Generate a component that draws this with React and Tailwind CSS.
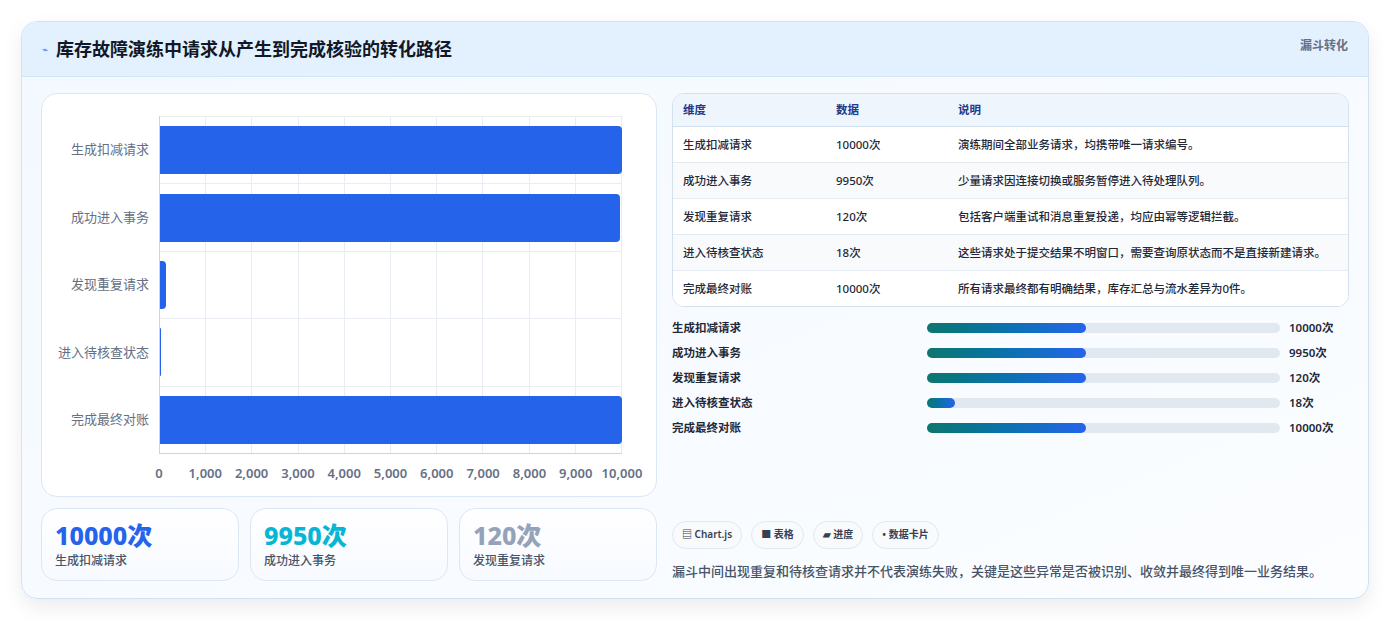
import React from "react";

const rows = [
  { name: "生成扣减请求", v: 10000, desc: "演练期间全部业务请求，均携带唯一请求编号。" },
  { name: "成功进入事务", v: 9950, desc: "少量请求因连接切换或服务暂停进入待处理队列。" },
  { name: "发现重复请求", v: 120, desc: "包括客户端重试和消息重复投递，均应由幂等逻辑拦截。" },
  { name: "进入待核查状态", v: 18, desc: "这些请求处于提交结果不明窗口，需要查询原状态而不是直接新建请求。" },
  { name: "完成最终对账", v: 10000, desc: "所有请求最终都有明确结果，库存汇总与流水差异为0件。" },
];
const progress = [45, 45, 45, 8, 45];
const ticks = ["0", "1,000", "2,000", "3,000", "4,000", "5,000", "6,000", "7,000", "8,000", "9,000", "10,000"];

const Chart = () => (
  <div className="h-[404px] rounded-2xl border border-[#dbe7f5] bg-white pt-[22px] pr-[34px] pl-[10px]">
    <div className="flex">
      <div className="w-[107px] flex flex-col">
        {rows.map((r) => (
          <div key={r.name} className="h-[67.5px] flex items-center justify-end pr-[10px] text-[13px] text-[#667085]">
            {r.name}
          </div>
        ))}
      </div>
      <div className="relative flex-1 h-[338px] border-l border-b border-[#cbd5e1]">
        <div className="absolute inset-0 grid grid-cols-10">
          {ticks.slice(1).map((t) => (
            <div key={t} className="border-r border-[#e8edf3]" />
          ))}
        </div>
        <div className="absolute inset-0 flex flex-col">
          {rows.map((r) => (
            <div key={r.name} className="h-[67.5px] flex items-center border-t border-[#e8edf3]">
              <div className="h-[48px] rounded-r bg-[#2563eb]" style={{ width: `${(r.v / 10000) * 100}%` }} />
            </div>
          ))}
        </div>
      </div>
    </div>
    <div className="ml-[107px] relative h-[30px] mt-[10px]">
      {ticks.map((t, i) => (
        <span key={t} className="absolute -translate-x-1/2 text-[13px] font-semibold text-[#667085]" style={{ left: `${i * 10}%` }}>
          {t}
        </span>
      ))}
    </div>
  </div>
);

const Stat = ({ v, l, c }) => (
  <div className="flex-1 h-[73px] rounded-2xl border border-[#dbe7f5] bg-gradient-to-b from-white to-[#f7faff] px-[13px] pt-[10px]">
    <div className={`text-[25px] leading-[32px] font-extrabold ${c}`}>{v}</div>
    <div className="text-[12px] text-[#475467] font-medium mt-[1px]">{l}</div>
  </div>
);

export default function App() {
  return (
    <div className="min-h-[621px] bg-white px-[21px] pt-[21px]" style={{ fontFamily: '"Noto Sans", "Noto Sans CJK SC", sans-serif' }}>
      <div className="rounded-2xl border border-[#cfe3f5] bg-gradient-to-br from-[#f3f9ff] to-[#fbfdff] shadow-[0_8px_20px_rgba(0,0,0,0.08)] overflow-hidden">
        <div className="h-[55px] bg-[#e3f0fd] border-b border-[#d3e6f8] flex items-center justify-between px-[20px]">
          <div className="flex items-center gap-[8px]">
            <span className="text-[#3b82f6] text-[10px]">⌁</span>
            <h1 className="text-[18px] font-bold text-[#111827]">库存故障演练中请求从产生到完成核验的转化路径</h1>
          </div>
          <span className="self-start mt-[15px] text-[12px] font-semibold text-[#667085]">漏斗转化</span>
        </div>
        <div className="flex gap-[15px] px-[19px] pt-[16px] pb-[17px]">
          <div className="w-[616px] flex flex-col gap-[11px]">
            <Chart />
            <div className="flex gap-[11px]">
              <Stat v="10000次" l="生成扣减请求" c="text-[#2563eb]" />
              <Stat v="9950次" l="成功进入事务" c="text-[#06b6d4]" />
              <Stat v="120次" l="发现重复请求" c="text-[#94a3b8]" />
            </div>
          </div>
          <div className="flex-1 flex flex-col">
            <div className="rounded-xl border border-[#d3e0ee] overflow-hidden bg-white text-[11.5px] text-[#1f2937] font-medium">
              <div className="flex h-[33px] items-center bg-[#eef5fd] border-b border-[#d3e0ee] text-[#1e3a8a] font-semibold">
                <div className="w-[163px] pl-[10px]">维度</div>
                <div className="w-[122px]">数据</div>
                <div className="flex-1">说明</div>
              </div>
              {rows.map((r, i) => (
                <div key={r.name} className={`flex py-[9px] leading-[17px] ${i < 4 ? "border-b border-[#e5ebf2]" : ""} ${i % 2 ? "bg-[#f8fafc]" : "bg-white"}`}>
                  <div className="w-[163px] pl-[10px]">{r.name}</div>
                  <div className="w-[122px]">{r.v}次</div>
                  <div className="flex-1 pr-[10px]">{r.desc}</div>
                </div>
              ))}
            </div>
            <div className="mt-[12px] flex flex-col gap-[7px]">
              {rows.map((r, i) => (
                <div key={r.name} className="flex items-center h-[18px] text-[11.5px] font-semibold text-[#1f2937]">
                  <div className="w-[255px]">{r.name}</div>
                  <div className="w-[353px] h-[10px] rounded-full bg-[#e2e8f0]">
                    <div className="h-full rounded-full bg-gradient-to-r from-[#0f766e] to-[#2563eb]" style={{ width: `${progress[i]}%` }} />
                  </div>
                  <div className="ml-[9px]">{r.v}次</div>
                </div>
              ))}
            </div>
            <div className="mt-auto flex gap-[9px] text-[10px] font-semibold text-[#344054]">
              {["▤ Chart.js", "■ 表格", "▰ 进度", "• 数据卡片"].map((t) => (
                <span key={t} className="h-[28px] px-[9px] flex items-center rounded-full border border-[#e2e8f0] bg-[#f8fafc]">{t}</span>
              ))}
            </div>
            <p className="mt-[13px] text-[13px] text-[#475467] font-medium">漏斗中间出现重复和待核查请求并不代表演练失败，关键是这些异常是否被识别、收敛并最终得到唯一业务结果。</p>
          </div>
        </div>
      </div>
    </div>
  );
}
